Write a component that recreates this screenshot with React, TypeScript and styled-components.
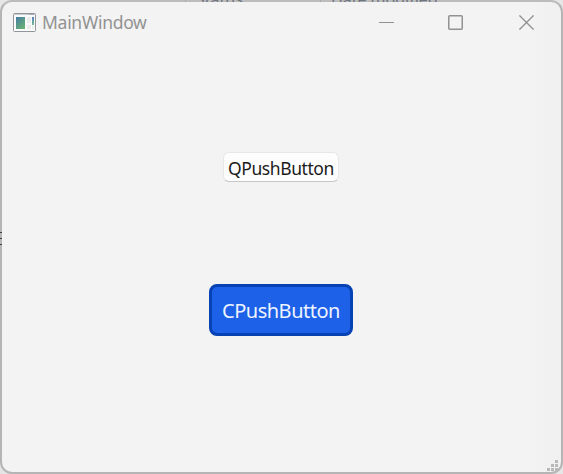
import React from "react";
import styled, { createGlobalStyle } from "styled-components";

const GlobalStyle = createGlobalStyle`
  * { box-sizing: border-box; }
  body { margin: 0; overflow: hidden; background: #e6e6e6; font-family: "Noto Sans", "Open Sans", sans-serif; }
`;

const Desktop = styled.div`
  position: relative;
  width: 563px;
  height: 474px;
  overflow: hidden;
  background: #e6e6e6;
`;

const Window = styled.main`
  display: flex;
  flex-direction: column;
  width: 563px;
  height: 474px;
  border: 2px solid #b5b5b5;
  border-top-color: #bcbcbc;
  border-radius: 12px;
  background: linear-gradient(90deg, #f3f3f3 0 94%, #f0f0f0 100%);
`;

const TitleBar = styled.header`
  display: flex;
  align-items: center;
  height: 40px;
  padding-left: 11px;
`;

const Title = styled.h1`
  flex: 1;
  margin: 0 0 0 6px;
  font-size: 17.5px;
  line-height: 24px;
  font-weight: 400;
  letter-spacing: -0.28px;
  color: #929292;
`;

const Controls = styled.div`
  display: flex;
  align-items: center;
  gap: 55px;
  padding-right: 27px;
`;

const IconButton = styled.button`
  display: flex;
  width: 15px;
  height: 15px;
  padding: 0;
  border: 0;
  background: none;

  &:nth-child(2) { margin: 0 1px 0 -1px; }
`;

const Content = styled.section`
  flex: 1;
  display: flex;
  flex-direction: column;
  align-items: center;
  padding-top: 110px;
  gap: 102px;
`;

const PlainButton = styled.button`
  width: 116px;
  height: 30px;
  margin-right: 1px;
  padding: 1px 0 0;
  border: 1px solid #e7e7e7;
  border-bottom-color: #c6c6c6;
  border-radius: 6px;
  background: #fdfdfd;
  color: #1b1b1b;
  font: 400 17.5px/26px "Noto Sans", sans-serif;
  letter-spacing: -0.42px;
  white-space: nowrap;
`;

const PrimaryButton = styled.button`
  width: 144px;
  height: 52px;
  margin-right: 1px;
  padding: 1px 0 0;
  border: 3px solid #0642b4;
  border-radius: 8px;
  background: #1c61e7;
  color: #eef4ff;
  font: 400 20px/44px "Noto Sans", sans-serif;
  letter-spacing: -0.48px;
  white-space: nowrap;
`;

const BackdropLabel = styled.span<{ $x: number }>`
  position: absolute;
  z-index: 1;
  top: 0;
  left: ${(p) => p.$x}px;
  display: flex;
  align-items: flex-end;
  height: 2px;
  overflow: hidden;
  padding-left: 10px;
  border-left: 1px solid #aaaaaa;
  color: #6d7580;
  font-size: 16px;
  line-height: 11px;
  white-space: nowrap;
`;

const LabelText = styled.span`
  margin-bottom: -3px;
`;

const EdgeFragment = styled.div`
  position: absolute;
  top: 232px;
  left: 0;
  display: flex;
  flex-direction: column;
  gap: 5px;
`;

const EdgeMark = styled.i`
  width: 2px;
  height: 1px;
  background: #404040;
`;

const SizeGrip = styled.svg`
  position: absolute;
  left: 547px;
  top: 460px;
  fill: #b9b9b9;
`;

const AppIcon = () => (
  <svg width="23" height="19" viewBox="0 0 23 19">
    <defs>
      <linearGradient id="preview" x1="0" y1="0" x2=".7" y2="1">
        <stop stopColor="#477ca4" />
        <stop offset="1" stopColor="#68b176" />
      </linearGradient>
      <linearGradient id="strip" x1="0" y1="0" x2="0" y2="1">
        <stop stopColor="#5581c6" />
        <stop offset="1" stopColor="#77b98f" />
      </linearGradient>
    </defs>
    <rect x=".5" y=".5" width="22" height="18" rx="1" fill="#fafafa" stroke="#92959a" />
    <path d="M1 1.5h21" stroke="#c8cbd0" />
    <path d="M16 1.5h5" stroke="#a5acb8" />
    <rect x="3" y="4" width="9" height="12" fill="url(#preview)" />
    <path d="M14 4h4v6h-4zM14 12h4v4h-4z" fill="#ececec" />
    <rect x="19" y="4" width="2" height="8" fill="url(#strip)" />
    <path d="M19 13h2v3h-2z" fill="#ececec" />
  </svg>
);

export default function App() {
  return (
    <>
      <GlobalStyle />
      <Desktop>
        <BackdropLabel $x={185}><LabelText>Status</LabelText></BackdropLabel>
        <BackdropLabel $x={320}><LabelText>Date modified</LabelText></BackdropLabel>
        <EdgeFragment><EdgeMark /><EdgeMark /><EdgeMark /></EdgeFragment>
        <Window>
          <TitleBar>
            <AppIcon />
            <Title>MainWindow</Title>
            <Controls>
              <IconButton aria-label="Minimize">
                <svg width="15" height="15"><path d="M0 7.5h15" stroke="#929292" /></svg>
              </IconButton>
              <IconButton aria-label="Maximize">
                <svg width="15" height="15"><rect x=".75" y=".75" width="13.5" height="13.5" rx="1" fill="none" stroke="#929292" strokeWidth="1.5" /></svg>
              </IconButton>
              <IconButton aria-label="Close">
                <svg width="15" height="15"><path d="m.4.4 14.2 14.2M14.6.4.4 14.6" fill="none" stroke="#929292" strokeWidth="1.35" /></svg>
              </IconButton>
            </Controls>
          </TitleBar>
          <Content>
            <PlainButton>QPushButton</PlainButton>
            <PrimaryButton>CPushButton</PrimaryButton>
          </Content>
        </Window>
        <SizeGrip width="11" height="11">
          <path d="M8 0h3v3H8zM4 4h3v3H4zM8 4h3v3H8zM0 8h3v3H0zM4 8h3v3H4zM8 8h3v3H8z" />
        </SizeGrip>
      </Desktop>
    </>
  );
}
